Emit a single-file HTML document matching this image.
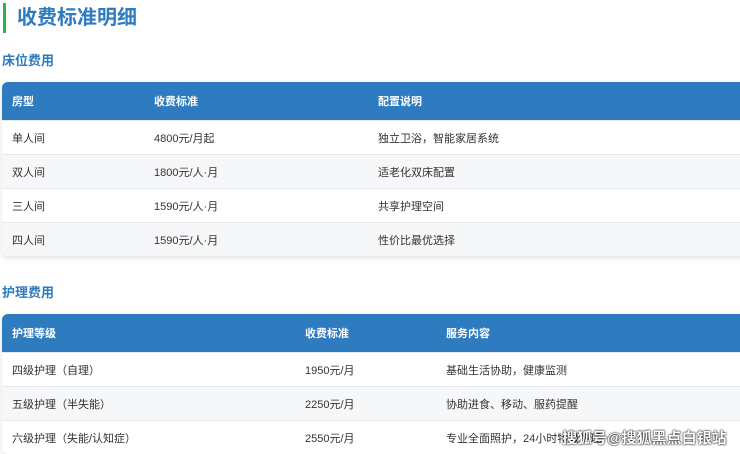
<!DOCTYPE html>
<html><head><meta charset="utf-8"><style>
body{margin:0;width:740px;height:454px;overflow:hidden;background:#fff;font-family:"Liberation Sans","Noto Sans CJK SC",sans-serif;position:relative}
.title{position:absolute;left:3px;top:3px;height:30px;border-left:3px solid #2bb24c;padding-left:11px;font-size:20px;font-weight:bold;color:#2e7bbf;line-height:30px}
.sub{position:absolute;left:2px;font-size:13px;font-weight:bold;color:#2e7bbf}
table{position:absolute;left:2px;width:760px;border-collapse:collapse;font-size:11px;color:#333;box-shadow:0 2px 6px rgba(0,0,0,.12);border-radius:6px 0 0 6px;overflow:hidden}
th{background:#2e7bbf;color:#fff;text-align:left;font-weight:bold;height:38px;padding:0 0 0 10px}
td{height:33px;padding:0 0 0 10px;border-top:1px solid #e6e9ee}
tr:nth-child(odd) td{background:#f6f7f9}
.wm{position:absolute;left:562px;top:427px;color:#fff;font-size:15px;font-weight:bold;text-shadow:0 0 2px #000,0 0 1px #000}
</style></head><body>
<div class="title">收费标准明细</div>
<div class="sub" style="top:50px">床位费用</div>
<table style="top:82px"><tr><th style="width:132px">房型</th><th style="width:214px">收费标准</th><th>配置说明</th></tr>
<tr><td>单人间</td><td>4800元/月起</td><td>独立卫浴，智能家居系统</td></tr>
<tr><td>双人间</td><td>1800元/人·月</td><td>适老化双床配置</td></tr>
<tr><td>三人间</td><td>1590元/人·月</td><td>共享护理空间</td></tr>
<tr><td>四人间</td><td>1590元/人·月</td><td>性价比最优选择</td></tr></table>
<div class="sub" style="top:282px">护理费用</div>
<table style="top:314px"><tr><th style="width:283px">护理等级</th><th style="width:131px">收费标准</th><th>服务内容</th></tr>
<tr><td>四级护理（自理）</td><td>1950元/月</td><td>基础生活协助，健康监测</td></tr>
<tr><td>五级护理（半失能）</td><td>2250元/月</td><td>协助进食、移动、服药提醒</td></tr>
<tr><td>六级护理（失能/认知症）</td><td>2550元/月</td><td>专业全面照护，24小时特级护理</td></tr></table>
<div class="wm">搜狐号@搜狐黑点白银站</div>
</body></html>
